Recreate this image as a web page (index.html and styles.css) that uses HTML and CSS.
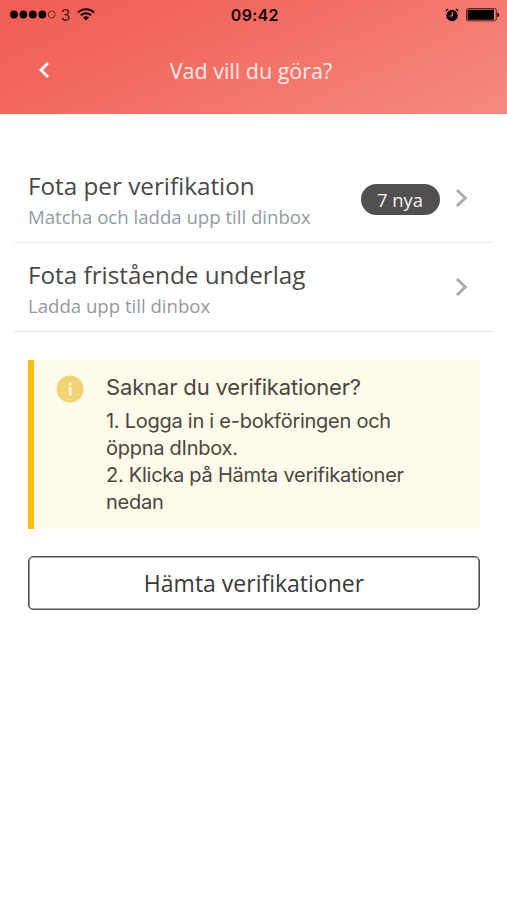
FILE: index.html
```html
<!DOCTYPE html>
<html lang="sv">
<head>
<meta charset="utf-8">
<title>Vad vill du göra?</title>
<link rel="stylesheet" href="styles.css">
</head>
<body>
<header class="header">
  <div class="status">
    <div class="status-left">
      <svg class="signal" width="46" height="9" viewBox="0 0 46 9"><g fill="#0c0303"><circle cx="4" cy="4.5" r="3.9"/><circle cx="13.4" cy="4.5" r="3.9"/><circle cx="22.8" cy="4.5" r="3.9"/><circle cx="32.3" cy="4.5" r="3.9"/></g><circle cx="41.7" cy="4.5" r="3.5" fill="none" stroke="#5c1f1b" stroke-width=".9"/></svg>
      <span class="carrier">3</span>
      <svg class="wifi" width="18" height="13" viewBox="0 0 18 13"><g fill="none" stroke="#170504" stroke-width="2"><path d="M1 4.500C5.200.1 12.800.1 17 4.500"/><path d="M3.900 7.400C6.700 4.500 11.300 4.500 14.100 7.400"/></g><path d="M5.900 9.500C7.600 7.900 10.400 7.900 12.100 9.500L9 12.600Z" fill="#170504"/></svg>
    </div>
    <span class="clock">09:42</span>
    <div class="status-right">
      <svg width="14" height="14" viewBox="0 0 14 14"><circle cx="7" cy="7.500" r="5.700" fill="#160504"/><path d="M1 3.300Q1.500 1.600 3.200 1.200M10.800 1.200Q12.500 1.600 13 3.300" fill="none" stroke="#160504" stroke-width="1.200"/><path d="M7.300 4.300V8H4.800" fill="none" stroke="#e9a09a" stroke-width="1"/></svg>
      <svg width="34" height="14" viewBox="0 0 34 14"><rect x=".5" y=".6" width="29.800" height="12.200" rx="1.800" fill="none" stroke="#5a1d19"/><rect x="1.600" y="1.700" width="26.400" height="10" rx=".6" fill="#000"/><path d="M31.300 4.400Q33.300 5 33.300 6.800T31.300 9.200Z" fill="#170504"/></svg>
    </div>
  </div>
  <div class="navbar">
    <svg class="back" width="12" height="18" viewBox="0 0 12 18"><path d="M10 1.900L3 9L10 16.100" fill="none" stroke="#fff" stroke-width="2.800"/></svg>
    <h1 class="title">Vad vill du göra?</h1>
  </div>
</header>
<main>
  <ul class="list">
    <li class="row">
      <div class="row-text"><div class="row-title">Fota per verifikation</div><div class="row-sub">Matcha och ladda upp till dinbox</div></div>
      <span class="badge">7 nya</span>
      <svg class="chevron" width="14" height="20" viewBox="0 0 14 20"><path d="M2 2L10.300 10L2 18" fill="none" stroke="#aaa" stroke-width="2.900"/></svg>
    </li>
    <li class="row">
      <div class="row-text"><div class="row-title">Fota fristående underlag</div><div class="row-sub">Ladda upp till dinbox</div></div>
      <svg class="chevron" width="14" height="20" viewBox="0 0 14 20"><path d="M2 2L10.300 10L2 18" fill="none" stroke="#aaa" stroke-width="2.900"/></svg>
    </li>
  </ul>
  <section class="notice">
    <svg class="info" width="28" height="28" viewBox="0 0 28 28"><circle cx="14" cy="14" r="13.500" fill="#f2d373"/><path d="M12.800 7.600H15.500V10.200H12.800ZM12.300 12H15.500V20.400H12.900V13.600H12.300Z" fill="#fff9e3"/></svg>
    <div>
      <h2 class="notice-title">Saknar du verifikationer?</h2>
      <p class="step">1. Logga in i e-bokföringen och<br>öppna dInbox.</p>
      <p class="step">2. Klicka på Hämta verifikationer<br>nedan</p>
    </div>
  </section>
  <button class="button" type="button">Hämta verifikationer</button>
</main>
</body>
</html>
```
FILE: styles.css
```css
* { box-sizing: border-box; }
body { margin: 0; background: #fff; font-family: "Open Sans", sans-serif; color: #444; }
svg { display: block; flex: none; }
h1, h2, p, ul { margin: 0; padding: 0; font-weight: 400; }
.header { height: 114px; background: linear-gradient(155deg, #f05d54 0%, #f2695f 35%, #f58b82 100%); }
.status { height: 29px; display: grid; grid-template-columns: 1fr auto 1fr; align-items: center; font-family: Inter, sans-serif; color: #160504; padding: 0 7px 0 9.5px; }
.status-left { display: flex; align-items: center; }
.carrier { font-size: 16px; line-height: 20px; margin: 0 7px 0 5px; color: #461713; }
.clock { font-size: 16px; line-height: 20px; font-weight: 600; letter-spacing: .25px; }
.status-right { display: flex; justify-content: flex-end; align-items: center; gap: 7px; }
.navbar { display: flex; align-items: center; height: 84px; padding: 0 38px; }
.back { margin-top: -2px; }
.title { flex: 1; text-align: center; padding-right: 17px; font-size: 21.5px; line-height: 30px; color: #ffe9e5; }
.list { list-style: none; padding: 40px 14px 0; }
.row { height: 89px; display: flex; align-items: center; padding: 0 24px 0 14px; border-bottom: 1px solid #ebebeb; }
.row-text { flex: 1; white-space: nowrap; padding-top: 3px; }
.row-title { font-size: 24.25px; line-height: 34px; color: #484848; }
.row-sub { font-size: 18.6px; line-height: 28px; color: #929ba2; }
.badge { width: 79px; height: 31px; border-radius: 16px; background: #505050; color: #f4f4f4; font-size: 18.4px; line-height: 31px; text-align: center; margin: 3px 15.5px 0 0; }
.notice { margin: 28px 27px 0 28px; height: 169px; border-left: 6px solid #ffbe0b; background: #fffbea; display: flex; padding: 10px 0 0 22px; font-family: Inter, sans-serif; }
.info { margin: 5px 22px 0 0; }
.notice-title { font-size: 22px; line-height: 34px; letter-spacing: -.15px; color: #484741; white-space: nowrap; }
.step { font-size: 20px; line-height: 27px; letter-spacing: -.26px; color: #484741; white-space: nowrap; }
.notice-title + .step { margin-top: 4px; }
.button { display: block; margin: 27px 27px 0 28px; width: 452px; height: 54px; border: 1px solid #505050; box-shadow: inset 0 0 0 .6px #505050; border-radius: 5px; background: #fff; font: 23px/30px "Open Sans", sans-serif; color: #3a3a3a; padding: 0; }
```
